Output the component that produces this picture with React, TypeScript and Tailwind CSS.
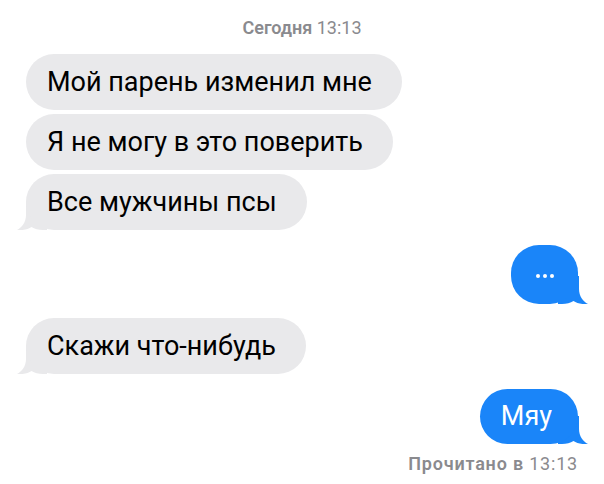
import React from "react";

const font = { fontFamily: "Roboto, 'Noto Sans', sans-serif" };

function TailLeft() {
  return (
    <svg
      className="absolute bottom-0 left-[-9px]"
      width="30"
      height="28"
      viewBox="0 0 30 28"
      aria-hidden="true"
    >
      <path
        d="M9 0 L9 13 C9 20 5 25.5 0 28 C6 28.5 11 27.5 14.5 25 C17.5 27 21.5 28 26 28 L30 28 L30 0 Z"
        fill="#e9e9eb"
      />
    </svg>
  );
}

function TailRight() {
  return (
    <svg
      className="absolute bottom-0 right-[-10px]"
      width="30"
      height="28"
      viewBox="0 0 30 28"
      aria-hidden="true"
    >
      <path
        d="M21 0 L21 13 C21 20 25 25.5 30 28 C24 28.5 19 27.5 15.5 25 C12.5 27 8.5 28 4 28 L0 28 L0 0 Z"
        fill="#1a85f9"
      />
    </svg>
  );
}

function Incoming({ text, tail }: { text: string; tail?: boolean }) {
  return (
    <div className="relative self-start">
      {tail && <TailLeft />}
      <div className="relative h-[56px] flex items-center rounded-[28px] bg-[#e9e9eb] pl-[21px] pr-[30px] text-[27px] text-black leading-none">
        {text}
      </div>
    </div>
  );
}

function Outgoing({ children, className }: { children: React.ReactNode; className: string }) {
  return (
    <div className="relative self-end">
      <TailRight />
      <div
        className={`relative flex items-center justify-center rounded-[28px] bg-[#1a85f9] text-white leading-none ${className}`}
      >
        {children}
      </div>
    </div>
  );
}

export default function App() {
  return (
    <div className="w-[604px] h-[484px] bg-white overflow-hidden px-[26px] pt-[18px]" style={font}>
      <div className="text-center text-[18px] leading-[20px] text-[#8a8a8e]">
        <span className="font-semibold">Сегодня</span> 13:13
      </div>

      <div className="mt-[16px] flex flex-col gap-[4px]">
        <Incoming text="Мой парень изменил мне" />
        <Incoming text="Я не могу в это поверить" />
        <Incoming text="Все мужчины псы" tail />
      </div>

      <div className="mt-[15px] flex flex-col">
        <Outgoing className="w-[67px] h-[59px]">
          <span className="flex gap-[3px] mt-[2px]">
            <span className="w-[4px] h-[4px] rounded-full bg-white" />
            <span className="w-[4px] h-[4px] rounded-full bg-white" />
            <span className="w-[4px] h-[4px] rounded-full bg-white" />
          </span>
        </Outgoing>
      </div>

      <div className="mt-[14px] flex flex-col">
        <Incoming text="Скажи что-нибудь" tail />
      </div>

      <div className="mt-[15px] flex flex-col">
        <Outgoing className="h-[55px] pl-[21px] pr-[26px] text-[27px]">Мяу</Outgoing>
        <div className="self-end mt-[10px] text-[18px] leading-[20px] tracking-[0.8px] text-[#8a8a8e]">
          <span className="font-semibold">Прочитано в</span> 13:13
        </div>
      </div>
    </div>
  );
}
